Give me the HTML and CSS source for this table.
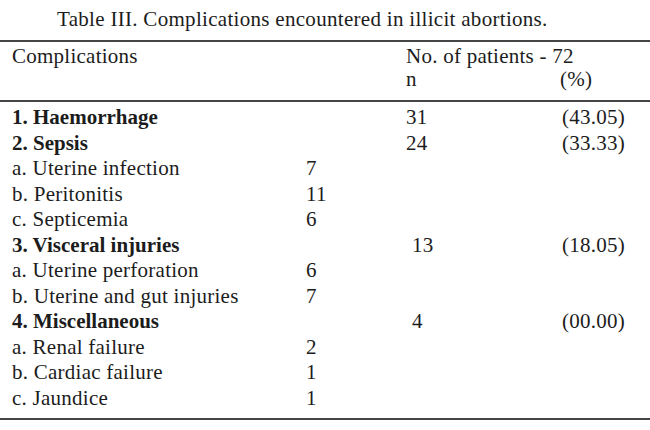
FILE: index.html
```html
<!DOCTYPE html>
<html>
<head>
<meta charset="utf-8">
<link rel="stylesheet" href="styles.css">
</head>
<body>
<div class="sheet">
  <h1 class="title">Table III. Complications encountered in illicit abortions.</h1>
  <div class="rule rule-top"></div>
  <div class="head">
    <div class="c1">Complications</div>
    <div class="c2"></div>
    <div class="c34">No. of patients - 72</div>
    <div class="c1"></div>
    <div class="c2"></div>
    <div class="c3">n</div>
    <div class="c4">(%)</div>
  </div>
  <div class="rule"></div>
  <div class="body">
    <div class="c1 b">1. Haemorrhage</div><div class="c2"></div><div class="c3">31</div><div class="c4 pc">(43.05)</div>
    <div class="c1 b">2. Sepsis</div><div class="c2"></div><div class="c3">24</div><div class="c4 pc">(33.33)</div>
    <div class="c1">a. Uterine infection</div><div class="c2">7</div><div class="c3"></div><div class="c4"></div>
    <div class="c1">b. Peritonitis</div><div class="c2">11</div><div class="c3"></div><div class="c4"></div>
    <div class="c1">c. Septicemia</div><div class="c2">6</div><div class="c3"></div><div class="c4"></div>
    <div class="c1 b">3. Visceral injuries</div><div class="c2"></div><div class="c3 in">13</div><div class="c4 pc">(18.05)</div>
    <div class="c1">a. Uterine perforation</div><div class="c2">6</div><div class="c3"></div><div class="c4"></div>
    <div class="c1">b. Uterine and gut injuries</div><div class="c2">7</div><div class="c3"></div><div class="c4"></div>
    <div class="c1 b">4. Miscellaneous</div><div class="c2"></div><div class="c3 in">4</div><div class="c4 pc">(00.00)</div>
    <div class="c1">a. Renal failure</div><div class="c2">2</div><div class="c3"></div><div class="c4"></div>
    <div class="c1">b. Cardiac failure</div><div class="c2">1</div><div class="c3"></div><div class="c4"></div>
    <div class="c1">c. Jaundice</div><div class="c2">1</div><div class="c3"></div><div class="c4"></div>
  </div>
  <div class="rule"></div>
</div>
</body>
</html>
```

FILE: styles.css
```css
html, body {
  margin: 0;
  padding: 0;
  background: #ffffff;
}

.sheet {
  width: 650px;
  height: 430px;
  padding-top: 7px;
  box-sizing: border-box;
  font-family: "Liberation Serif", serif;
  font-size: 21px;
  line-height: 25.5px;
  letter-spacing: 0.25px;
  color: #1c1c1c;
}

.title {
  margin: 0 0 0 57px;
  font-family: "Liberation Serif", serif;
  font-size: 21px;
  font-weight: normal;
  letter-spacing: 0.3px;
  line-height: 25.5px;
  height: 25.5px;
}

.rule {
  height: 2px;
  background: #454545;
}

.rule-top {
  margin-top: 7.5px;
}

.head,
.body {
  display: grid;
  grid-template-columns: 294px 100px 154px 1fr;
  padding-left: 12px;
  font-family: "Liberation Serif", serif;
}

.head {
  padding-top: 3px;
  padding-bottom: 9px;
  line-height: 23px;
}

.body {
  padding-top: 3px;
  padding-bottom: 7px;
}

.c34 {
  grid-column: span 2;
}

.c3.in {
  padding-left: 6px;
}

.pc {
  padding-left: 2px;
}

.b {
  font-weight: bold;
  letter-spacing: 0;
}
```
